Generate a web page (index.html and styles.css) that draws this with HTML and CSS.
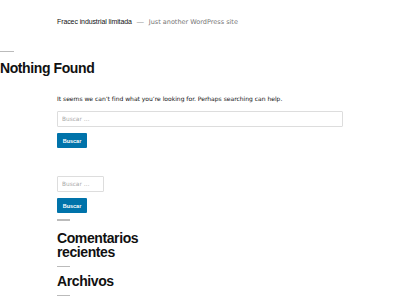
FILE: index.html
```html
<!DOCTYPE html>
<html lang="es">
<head>
  <meta charset="UTF-8" />
  <meta name="viewport" content="width=device-width, initial-scale=1.0"/>
  <title>Nothing Found – Fracec industrial limitada</title>
  <link rel="stylesheet" href="styles.css">
</head>
<body>
  <header id="masthead" class="site-header">
    <div class="site-branding">
      <span class="site-title">Fracec industrial limitada</span>
      <span class="site-sep">—</span>
      <span class="site-description">Just another WordPress site</span>
    </div>
  </header>

  <main class="site-main">
    <section class="no-results">
      <header class="page-header">
        <h1 class="page-title">Nothing Found</h1>
      </header>
      <div class="page-content">
        <p>It seems we can’t find what you’re looking for. Perhaps searching can help.</p>
        <form class="search-form search-form-wide">
          <input type="search" class="search-field" placeholder="Buscar …">
          <button type="submit" class="search-submit">Buscar</button>
        </form>
      </div>
    </section>
  </main>

  <aside class="widget-area">
    <section class="widget widget-search">
      <form class="search-form">
        <input type="search" class="search-field" placeholder="Buscar …">
        <button type="submit" class="search-submit">Buscar</button>
      </form>
    </section>
    <section class="widget">
      <h2 class="widget-title">Comentarios recientes</h2>
    </section>
    <section class="widget">
      <h2 class="widget-title">Archivos</h2>
    </section>
  </aside>
</body>
</html>
```

FILE: styles.css
```css
* {
  box-sizing: border-box;
  margin: 0;
  padding: 0;
}

body {
  font-family: "Liberation Sans", Arial, sans-serif;
  background: #fff;
  color: #111;
  overflow: hidden;
}

/* Header */
.site-header {
  padding: 17px 0 0 57px;
  height: 51px;
}

.site-branding {
  font-size: 7px;
  line-height: 10px;
  white-space: nowrap;
}

.site-title {
  color: #111;
  font-weight: 500;
  letter-spacing: -0.1px;
}

.site-sep {
  color: #999;
  margin: 0 3px;
}

.site-description {
  color: #767676;
  font-family: "DejaVu Sans", sans-serif;
  font-size: 6.5px;
}

/* Titles with a short rule before them */
.page-title::before,
.widget-title::before,
.widget-search::after,
.widget:last-child::after {
  content: "";
  display: block;
  height: 1px;
  background: #bbb;
}

.page-title,
.widget-title {
  font-size: 14px;
  line-height: 14px;
  font-weight: 700;
  letter-spacing: -0.4px;
  color: #111;
}

.page-title::before {
  width: 14px;
  margin-bottom: 9px;
}

/* Content */
.page-content {
  padding: 0 57px;
  margin-top: 19px;
}

.page-content p {
  font-family: "DejaVu Sans", sans-serif;
  font-size: 6px;
  line-height: 10px;
  color: #111;
}

.search-form {
  display: flex;
  flex-direction: column;
  align-items: flex-start;
  gap: 6px;
}

.search-form-wide {
  margin-top: 7px;
}

.search-field {
  width: 47px;
  height: 16px;
  border: 1px solid #ddd;
  border-radius: 1px;
  padding: 0 4px;
  font-family: "DejaVu Sans", sans-serif;
  font-size: 5.8px;
  color: #111;
  background: #fff;
  outline: none;
}

.search-form-wide .search-field {
  width: 286px;
}

.search-field::placeholder {
  color: #aaa;
}

.search-submit {
  width: 30px;
  height: 15px;
  border: none;
  border-radius: 1px;
  background: #0073aa;
  color: #fff;
  font-family: "Liberation Sans", Arial, sans-serif;
  font-size: 5.5px;
  font-weight: 700;
}

/* Widgets */
.widget-area {
  padding: 28px 57px 0;
}

.widget-title {
  max-width: 100px;
  padding-bottom: 7px;
}

.widget-search::after {
  width: 13px;
  margin-top: 6px;
}

.widget-title::before {
  width: 13px;
  margin-bottom: 7px;
}

.widget-search + .widget .widget-title::before {
  margin-bottom: 10px;
}

.widget:last-child::after {
  width: 13px;
}
```
